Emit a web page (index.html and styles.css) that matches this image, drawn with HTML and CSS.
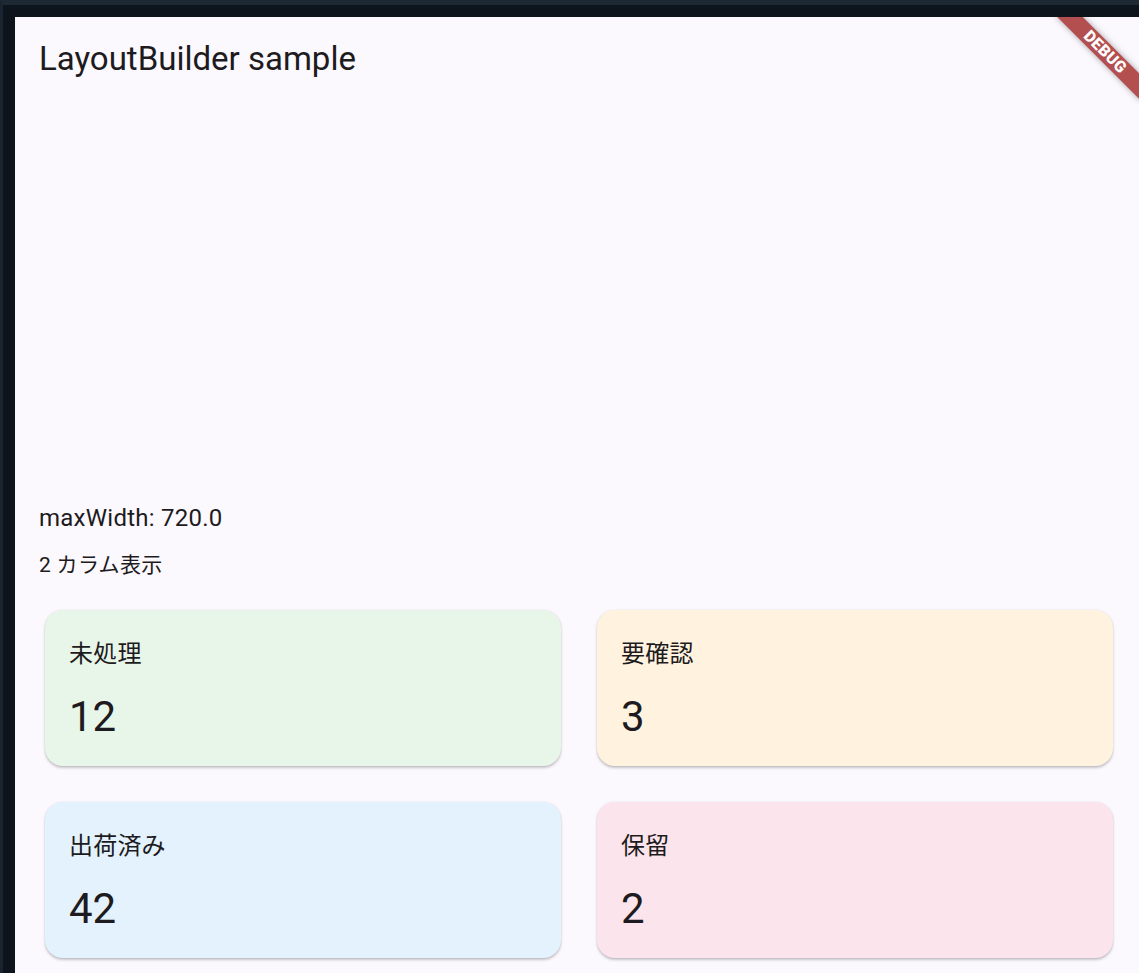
FILE: index.html
```html
<!DOCTYPE html>
<html lang="ja">
<head>
  <meta charset="UTF-8">
  <meta name="viewport" content="width=device-width, initial-scale=1.0">
  <title>LayoutBuilder sample</title>
  <link rel="stylesheet" href="styles.css">
</head>
<body>

<div class="app">
  <header class="app-bar">
    <h1>LayoutBuilder sample</h1>
  </header>

  <main class="content">
    <p class="max-width">maxWidth: 720.0</p>
    <p class="columns">2 カラム表示</p>

    <div class="grid">
      <div class="card green">
        <span class="label">未処理</span>
        <span class="count">12</span>
      </div>
      <div class="card orange">
        <span class="label">要確認</span>
        <span class="count">3</span>
      </div>
      <div class="card blue">
        <span class="label">出荷済み</span>
        <span class="count">42</span>
      </div>
      <div class="card pink">
        <span class="label">保留</span>
        <span class="count">2</span>
      </div>
    </div>
  </main>

  <!-- debug ribbon in the corner -->
  <div class="debug-banner">
    <div class="ribbon">DEBUG</div>
  </div>
</div>

</body>
</html>
```

FILE: styles.css
```css
html, body {
  height: 100%;
}
body {
  margin: 0;
  padding: 0;
  box-sizing: border-box;
  overflow: hidden;
  background-color: #0d141b;
  border-top: 5px solid #1e2936;
  border-left: 3px solid #1a2430;
  font-family: Roboto, "Noto Sans CJK JP", sans-serif;
  color: #1d1b20;
}
.app {
  position: relative;
  margin: 12px 0 0 12px;
  height: 956px;
  overflow: hidden;
  background-color: #fbf8fe;
}
.app-bar {
  height: 84px;
  padding-left: 24px;
  display: flex;
  align-items: center;
}
.app-bar h1 {
  margin: 0;
  font-size: 33px;
  font-weight: 400;
  line-height: 42px;
}
.content {
  padding: 399px 24px 0 24px;
}
.max-width {
  margin: 0;
  font-size: 24px;
  line-height: 36px;
  letter-spacing: 0.25px;
}
.columns {
  margin: 14px 0 0 0;
  font-size: 21px;
  line-height: 30px;
  letter-spacing: 0.3px;
}
.grid {
  margin-top: 24px;
  display: grid;
  grid-template-columns: repeat(2, 528px);
  grid-auto-rows: 168px;
  column-gap: 24px;
  row-gap: 24px;
}
.card {
  margin: 6px;
  padding: 26px 24px 22px 24px;
  border-radius: 18px;
  display: flex;
  flex-direction: column;
  justify-content: space-between;
  box-shadow: 0 1.5px 3px rgba(0, 0, 0, 0.2), 0 1px 1.5px rgba(0, 0, 0, 0.06);
}
.card .label {
  font-size: 24px;
  line-height: 36px;
  letter-spacing: 0.2px;
}
.card .count {
  font-size: 42px;
  line-height: 54px;
}
.green {
  background-color: #e8f5e9;
}
.orange {
  background-color: #fff3e0;
}
.blue {
  background-color: #e3f2fd;
}
.pink {
  background-color: #fce4ec;
}
.debug-banner {
  position: absolute;
  top: 0;
  right: 0;
  width: 120px;
  height: 120px;
  overflow: hidden;
  pointer-events: none;
}
.ribbon {
  position: absolute;
  left: 26px;
  top: 26px;
  width: 120px;
  height: 18px;
  transform: rotate(45deg);
  background-color: #b44f50;
  box-shadow: 0 0 6px rgba(0, 0, 0, 0.35);
  color: #ffffff;
  font-size: 16px;
  font-weight: 900;
  line-height: 18px;
  letter-spacing: 0.3px;
  text-align: center;
}
```
